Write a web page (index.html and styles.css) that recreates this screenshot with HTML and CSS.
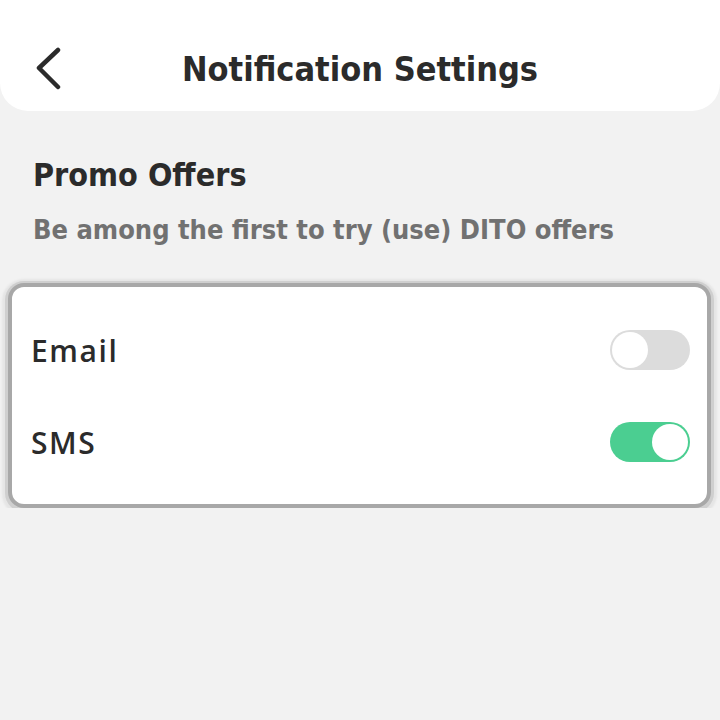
FILE: index.html
```html
<!DOCTYPE html>
<html lang="en">
<head>
    <meta charset="UTF-8">
    <meta name="viewport" content="width=device-width, initial-scale=1.0">
    <title>Notification Settings</title>
    <link rel="stylesheet" href="styles.css">
</head>
<body>
    <div class="header">
        <button class="back" aria-label="Back">
            <svg width="30" height="44" viewBox="0 0 30 44">
                <path d="M24 4 L5 22 L24 41" fill="none" stroke="#2b2b2b" stroke-width="4.5" stroke-linecap="round" stroke-linejoin="round"/>
            </svg>
        </button>
        <h1>Notification Settings</h1>
    </div>

    <div class="section">
        <h2>Promo Offers</h2>
        <p class="subtitle">Be among the first to try (use) DITO offers</p>
    </div>

    <div class="card">
        <div class="row">
            <span class="label">Email</span>
            <label class="switch">
                <input type="checkbox">
                <span class="knob"></span>
            </label>
        </div>
        <div class="row">
            <span class="label">SMS</span>
            <label class="switch">
                <input type="checkbox" checked>
                <span class="knob"></span>
            </label>
        </div>
    </div>
</body>
</html>
```

FILE: styles.css
```css
body {
    margin: 0;
    background-color: #f2f2f2;
    font-family: "DejaVu Sans Condensed", "Liberation Sans Narrow", sans-serif;
    color: #2b2b2b;
}
.header {
    position: relative;
    height: 111px;
    background: white;
    border-radius: 0 0 28px 28px;
    display: flex;
    align-items: center;
    justify-content: center;
}
.back {
    position: absolute;
    left: 34px;
    top: 46px;
    padding: 0;
    border: none;
    background: none;
    cursor: pointer;
}
.header h1 {
    margin: 26px 0 0;
    font-size: 34px;
    font-weight: bold;
}
.section {
    padding: 45px 33px 0;
}
.section h2 {
    margin: 0;
    font-size: 32px;
    font-weight: bold;
    line-height: 38px;
}
.subtitle {
    margin: 20px 0 0;
    font-size: 27px;
    font-weight: bold;
    line-height: 32px;
    color: #717171;
}
.card {
    margin: 37px 9px 0 8px;
    padding: 43px 17px 42px 19px;
    background: white;
    border: 4px solid #a8a8a8;
    border-radius: 16px;
    box-shadow: 0 1px 0 3px #cfcfcf, 0 2px 2px 6px #e5e5e5;
    display: flex;
    flex-direction: column;
    gap: 52px;
}
.row {
    display: flex;
    align-items: center;
    justify-content: space-between;
    height: 40px;
}
.label {
    font-family: "Open Sans", sans-serif;
    font-size: 30px;
    font-weight: 600;
    letter-spacing: 1.6px;
}
.switch {
    position: relative;
    width: 80px;
    height: 40px;
    cursor: pointer;
}
.switch input {
    display: none;
}
.knob {
    position: absolute;
    inset: 0;
    border-radius: 20px;
    background: #dcdcdc;
}
.knob::after {
    content: "";
    position: absolute;
    left: 2px;
    top: 2px;
    width: 36px;
    height: 36px;
    border-radius: 50%;
    background: white;
}
.switch input:checked + .knob {
    background: #4bce91;
}
.switch input:checked + .knob::after {
    left: 42px;
}
```
